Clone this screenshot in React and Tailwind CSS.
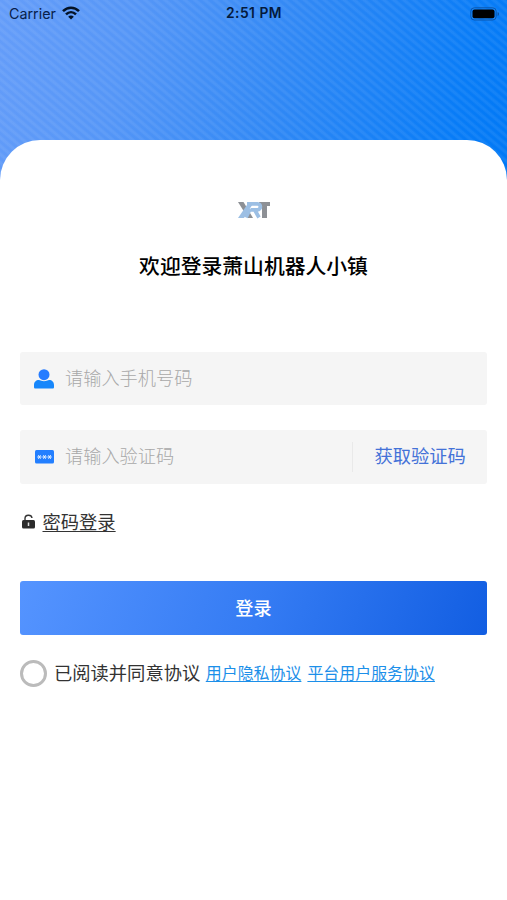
function Stripes() {
  return (
    <div className="absolute inset-0 bg-[repeating-linear-gradient(40deg,rgba(255,255,255,0.065)_0px,rgba(255,255,255,0.065)_1.5px,rgba(255,255,255,0)_3.2px,rgba(255,255,255,0)_4.7px,rgba(255,255,255,0.065)_6.4px)]" />
  );
}

function StatusBar() {
  return (
    <div className="relative grid h-7 grid-cols-3 items-center pl-[9px] pr-[8px] font-['Inter','Liberation_Sans',sans-serif] text-[#08204a]">
      <div className="flex items-center gap-[6px]">
        <span className="text-[14.3px] leading-none">Carrier</span>
        <svg className="-mt-[2px]" width="18" height="14" viewBox="0 0 18 14" fill="none" stroke="#051326" strokeWidth="2.5">
          <path d="M1 5.2C5.6 .5 12.4 .5 17 5.2" />
          <path d="M4 8.3C7 5.4 11 5.4 14 8.3" />
          <path d="M9 13.6 6.2 10.7C7.8 9.2 10.2 9.2 11.8 10.7Z" fill="#051326" stroke="none" />
        </svg>
      </div>
      <span className="whitespace-nowrap text-center text-[13.8px] font-semibold leading-none tracking-[0.5px] text-[#041a3c]">2:51 PM</span>
      <svg className="-mt-px justify-self-end" width="29" height="14" viewBox="0 0 29 14">
        <rect x=".8" y=".8" width="25.400" height="12.200" rx="3.500" fill="none" stroke="#0b57ad" />
        <rect x="2.500" y="2.500" width="22" height="8.800" rx="2" fill="#000" />
        <path d="M27.600 5v4c2-.7 2-3.300 0-4z" fill="#0b57ad" />
      </svg>
    </div>
  );
}

function Logo() {
  return (
    <svg className="mx-auto block" width="34" height="20" viewBox="0 0 34 20" fill="none">
      <path d="M1 2h5.500l9.500 16h-5z" fill="#8d9095" />
      <path d="M22 2h11v4h-3v12h-5V6h-3z" fill="#8d9095" />
      <path d="M12 2h5L7 18H1z" fill="#9cbfe4" />
      <path d="M10 3.800h10.500c4 0 3.500 6 0 6H13.500M17.500 9.500l4.500 8M13 9l-4 8.500" stroke="#9cbfe4" strokeWidth="3.800" />
    </svg>
  );
}

export default function App() {
  return (
    <div className="h-[900px] w-[507px] overflow-hidden bg-white font-['Noto_Sans_CJK_SC',sans-serif]">
      <header className="relative h-[180px] bg-[linear-gradient(105deg,#659df9_0%,#5596f7_25%,#3088f5_55%,#087cf7_88%,#0078f5_100%)]">
        <Stripes />
        <StatusBar />
      </header>
      <main className="relative -mt-10 h-[760px] rounded-t-[40px] bg-white px-[20px] pt-[60px]">
        <Logo />
        <h1 className="mt-[29px] text-center text-[20.800px] font-medium leading-8 text-black">欢迎登录萧山机器人小镇</h1>
        <div className="mt-[71px] flex h-[53px] w-[467px] items-center rounded-[3px] bg-[#f5f5f5] pl-[14px]">
          <svg width="20" height="20" viewBox="0 0 20 20" fill="#1787fb">
            <circle cx="10" cy="5.700" r="5.500" fill="#267cff" />
            <path d="M0 18v-2c0-3 2-5 5-5 3 1.500 7 1.500 10 0 3 0 5 2 5 5v2c0 1-.5 1.500-1.500 1.500h-17C.5 19.500 0 19 0 18z" />
          </svg>
          <span className="-mt-[2px] ml-[11px] text-[18.200px] font-light leading-none text-[#a8a8a8]">请输入手机号码</span>
        </div>
        <div className="mt-[25px] flex h-[54px] w-[467px] items-center rounded-[3px] bg-[#f5f5f5] pl-[15px]">
          <svg width="19" height="14" viewBox="0 0 19 14">
            <rect width="19" height="13.500" rx="1.500" fill="#237fff" />
            <g stroke="#e6f1ff" strokeWidth="1">
              <path d="M2.200 7h4.400M3.300 5.200l2.200 3.600M5.500 5.200l-2.200 3.600" />
              <path d="M7.300 7h4.400M8.400 5.200l2.200 3.600M10.600 5.200l-2.200 3.600" />
              <path d="M12.400 7h4.400M13.500 5.200l2.200 3.600M15.700 5.200l-2.200 3.600" />
            </g>
          </svg>
          <span className="-mt-[3px] ml-[11px] flex-1 text-[18.200px] font-light leading-none text-[#a8a8a8]">请输入验证码</span>
          <button className="flex h-[30px] w-[135px] items-center border-l border-[#e9e9e9] pb-[3px] pl-[21.500px] text-[18.300px] leading-none text-[#4472d8]">获取验证码</button>
        </div>
        <div className="mt-[22px] flex h-[30px] items-center">
          <svg className="ml-[2px]" width="13" height="15" viewBox="0 0 13 15">
            <path d="M3 7V4.500C3 .2 9.500.2 10 4" fill="none" stroke="#333" strokeWidth="1.400" />
            <rect y="6" width="13" height="8.500" rx="1.500" fill="#2b2b2b" />
            <path d="M6.500 8.500v3.500" stroke="#ddd" strokeWidth="1.500" />
          </svg>
          <a className="ml-[7.500px] text-[18.300px] leading-none text-[#333] underline decoration-1 underline-offset-2">密码登录</a>
        </div>
        <button className="mt-[45px] flex h-[54px] w-[467px] items-center justify-center rounded-[3px] bg-[linear-gradient(110deg,#5594ff_0%,#347bf3_52%,#125ee2_100%)] pb-[2px] text-[18.200px] font-medium leading-none text-white">登录</button>
        <label className="mt-[23px] flex h-[30px] items-center whitespace-nowrap">
          <span className="size-[27px] shrink-0 rounded-full border-[3px] border-[#bbb]" />
          <span className="-mt-[2px] ml-[7px] text-[18.300px] leading-none text-[#333]">已阅读并同意协议</span>
          <a className="ml-[5.500px] text-[15.950px] leading-none text-[#1c8fe9] underline decoration-1 underline-offset-2">用户隐私协议</a>
          <a className="ml-[6px] text-[15.950px] leading-none text-[#1c8fe9] underline decoration-1 underline-offset-2">平台用户服务协议</a>
        </label>
      </main>
    </div>
  );
}
